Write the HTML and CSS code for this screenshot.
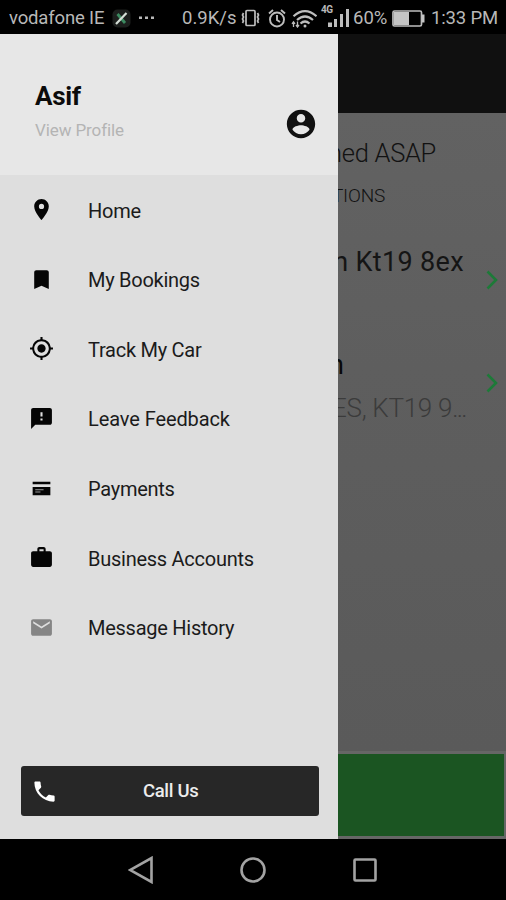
FILE: index.html
```html
<!DOCTYPE html>
<html lang="en">
<head>
<meta charset="utf-8">
<title>Menu</title>
<link rel="stylesheet" href="styles.css">
</head>
<body>
<div class="phone">
  <header class="status">
    <span class="carrier">vodafone IE</span>
    <svg class="app" width="19" height="19" viewBox="0 0 19 19"><rect x=".5" y=".5" width="18" height="18" rx="5" fill="#1c1f1d"/><path d="M5.500 5l7.500 9" stroke="#3c8a60" stroke-width="2.800"/><path d="M14.500 4L4 15" stroke="#d4ded6" stroke-width="2.200"/></svg>
    <svg class="dots" width="15" height="4" viewBox="0 0 15 4" fill="#b8b8b8"><path d="M0 .5h3v2.500H0zM6 .5h3v2.500H6zM12 .5h3v2.500h-3z"/></svg>
    <span class="speed">0.9K/s</span>
    <svg class="vibrate" width="19" height="18" viewBox="0 0 19 18" fill="none" stroke="#bdbdbd" stroke-width="1.700"><rect x="5" y="1.500" width="9" height="15" rx="1"/><path d="M2.500 4l-1 2 1 2-1 2 1 2-1 2M16.500 4l1 2-1 2 1 2-1 2 1 2"/></svg>
    <svg class="alarm" width="18" height="19" viewBox="0 0 18 19" fill="none" stroke="#bdbdbd" stroke-width="1.900"><circle cx="9" cy="10.500" r="7"/><path d="M1 4.500L5 1M17 4.500L13 1M9 6v5l3 2"/></svg>
    <svg class="wifi" width="26" height="19" viewBox="0 0 26 19" fill="none" stroke="#bdbdbd" stroke-width="2.200"><path d="M2.500 7.200Q14 -3 25.500 7.200M6 11Q14 4 22 11M9.500 14.500Q14 10.500 18.500 14.500"/><circle cx="14" cy="17" r="1.500" fill="#bdbdbd" stroke="none"/><path d="M2.500 18v-5M1 14.800l1.500-2 1.500 2M6.500 12.500v5M5 16l1.500 2L8 16" stroke-width="1.300"/></svg>
    <span class="signal"><span class="gen">4G</span><svg width="21" height="18" viewBox="0 0 21 18" fill="#bdbdbd"><path d="M0 13.500h4V18H0zM6 10h3v8H6zM12 5h3v13h-3zM18 0h3v18h-3z"/></svg></span>
    <span class="percent">60%</span>
    <svg class="battery" width="33" height="17" viewBox="0 0 33 17"><rect x="1" y="1" width="28.500" height="15" rx="1.500" fill="none" stroke="#bdbdbd" stroke-width="1.700"/><path d="M2 2h15v13H2zM30 4.500h2.500v8H30z" fill="#c4c4c4"/></svg>
    <span class="clock">1:33 PM</span>
  </header>

  <main class="screen">
    <aside class="drawer">
      <section class="profile">
        <div><h1>Asif</h1><p>View Profile</p></div>
        <svg width="34" height="34" viewBox="0 0 24 24" fill="#111"><path d="M12 2C6.480 2 2 6.480 2 12s4.480 10 10 10 10-4.480 10-10S17.520 2 12 2zm0 3c1.660 0 3 1.340 3 3s-1.340 3-3 3-3-1.340-3-3 1.340-3 3-3zm0 14.200c-2.500 0-4.710-1.280-6-3.220.030-1.990 4-3.080 6-3.080 1.990 0 5.970 1.090 6 3.080-1.290 1.940-3.500 3.220-6 3.220z"/></svg>
      </section>
      <nav class="menu">
        <a><svg viewBox="0 0 24 24"><path d="M12 2C8.130 2 5 5.130 5 9c0 5.250 7 13 7 13s7-7.750 7-13c0-3.870-3.130-7-7-7zm0 9.500a2.500 2.500 0 0 1 0-5 2.500 2.500 0 0 1 0 5z"/></svg><span>Home</span></a>
        <a><svg viewBox="0 0 24 24"><path d="M17 3H7c-1.100 0-2 .9-2 2v16l7-3 7 3V5c0-1.100-.9-2-2-2z"/></svg><span>My Bookings</span></a>
        <a><svg viewBox="0 0 24 24"><path d="M12 8c-2.210 0-4 1.790-4 4s1.790 4 4 4 4-1.790 4-4-1.790-4-4-4zm8.940 3A8.994 8.994 0 0 0 13 3.060V1h-2v2.060A8.994 8.994 0 0 0 3.060 11H1v2h2.060A8.994 8.994 0 0 0 11 20.940V23h2v-2.060A8.994 8.994 0 0 0 20.940 13H23v-2h-2.060zM12 19c-3.870 0-7-3.130-7-7s3.130-7 7-7 7 3.130 7 7-3.130 7-7 7z"/></svg><span>Track My Car</span></a>
        <a><svg viewBox="0 0 24 24"><path d="M20 2H4c-1.100 0-1.990.9-1.990 2L2 22l4-4h14c1.100 0 2-.9 2-2V4c0-1.100-.9-2-2-2zm-7 12h-2v-2h2v2zm0-4h-2V6h2v4z"/></svg><span class="feedback">Leave Feedback</span></a>
        <a><svg viewBox="0 0 24 24"><path d="M3.500 5.500h17v2.500h-17zM3.500 10.500h17v8h-17z"/><path d="M6 13.200h8M6 15.300h5" stroke="#999" stroke-width="1"/></svg><span>Payments</span></a>
        <a><svg viewBox="0 0 24 24"><path d="M20 6h-4V4c0-1.110-.89-2-2-2h-4c-1.110 0-2 .89-2 2v2H4c-1.110 0-2 .89-2 2v11c0 1.110.89 2 2 2h16c1.110 0 2-.89 2-2V8c0-1.110-.89-2-2-2zm-6 0h-4V4h4v2z"/></svg><span>Business Accounts</span></a>
        <a><svg class="mail" viewBox="0 0 24 24"><path d="M20 4H4c-1.100 0-1.990.9-1.990 2L2 18c0 1.100.9 2 2 2h16c1.100 0 2-.9 2-2V6c0-1.100-.9-2-2-2zm0 4l-8 5-8-5V6l8 5 8-5v2z"/></svg><span>Message History</span></a>
      </nav>
      <button class="call"><svg width="27" height="27" viewBox="0 0 24 24" fill="#fff"><path d="M6.620 10.790c1.440 2.830 3.760 5.140 6.590 6.590l2.200-2.200c.27-.27.67-.36 1.020-.24 1.120.37 2.330.57 3.570.57.550 0 1 .45 1 1V20c0 .55-.45 1-1 1-9.390 0-17-7.610-17-17 0-.55.45-1 1-1h3.500c.55 0 1 .45 1 1 0 1.250.2 2.450.57 3.570.110.350.030.740-.25 1.020l-2.200 2.200z"/></svg><span>Call Us</span></button>
    </aside>

    <section class="booking">
      <div class="titlebar"></div>
      <div class="content">
        <div class="line asap">ned ASAP</div>
        <div class="line options">TIONS</div>
        <div class="place first"><div class="line address">n Kt19 8ex</div><svg width="12" height="20" viewBox="0 0 12 20"><path d="M1.500 1.500l8.500 8.500-8.500 8.500"/></svg></div>
        <div class="place second"><div class="stack"><div class="line name">n</div><div class="line detail">ES, KT19 9<span class="more">...</span></div></div><svg width="12" height="20" viewBox="0 0 12 20"><path d="M1.500 1.500l8.500 8.500-8.500 8.500"/></svg></div>
      </div>
      <div class="confirm"></div>
    </section>
  </main>

  <footer class="keys">
    <svg width="26" height="28" viewBox="0 0 26 28"><path d="M23.500 2v24L2 14z"/></svg>
    <svg width="26" height="28" viewBox="0 0 26 28"><circle cx="13" cy="14" r="11.500"/></svg>
    <svg width="26" height="28" viewBox="0 0 26 28"><rect x="2.500" y="3.500" width="21" height="21" rx="1"/></svg>
  </footer>
</div>
</body>
</html>
```
FILE: styles.css
```css
* { box-sizing: border-box; }
body { margin: 0; background: #000; font-family: Roboto, "Liberation Sans", sans-serif; }
h1, p { margin: 0; }
svg { display: block; flex: none; }
.phone { width: 506px; height: 900px; display: flex; flex-direction: column; overflow: hidden; }

.status { height: 34px; flex: none; display: flex; align-items: center; padding: 2px 0 0 9px; color: #b8b8b8; font-size: 18.500px; white-space: nowrap; background: #000; }
.status span { flex: none; }
.carrier { width: 103px; letter-spacing: -.15px; }
.dots { margin-left: 8px; }
.speed { width: 59px; margin-left: 28px; }
.alarm { margin-left: 8px; }
.wifi { margin-left: 5px; }
.signal { position: relative; width: 28px; padding-left: 7px; margin-left: 4px; }
.gen { position: absolute; left: 0; top: -5px; font-size: 10px; line-height: 12px; font-weight: 700; letter-spacing: -.5px; }
.percent { width: 36px; margin-left: 4px; }
.battery { margin-left: 3px; }
.clock { margin-left: 6px; letter-spacing: -.15px; }

.screen { height: 805px; flex: none; display: flex; }
.drawer { width: 338px; flex: none; display: flex; flex-direction: column; background: #dedede; }
.profile { height: 141px; flex: none; display: flex; justify-content: space-between; background: #e7e7e7; padding: 45px 20px 0 35px; }
.profile h1 { font-size: 26px; line-height: 34px; font-weight: 700; color: #0b0b0b; letter-spacing: -.3px; }
.profile p { margin-top: 6px; font-size: 17px; line-height: 22px; color: #b4b4b4; letter-spacing: -.1px; }
.profile svg { margin-top: 28px; }
.menu { height: 487px; flex: none; display: grid; grid-template-rows: repeat(7, 1fr); }
.menu a { display: flex; align-items: center; padding-left: 28.500px; font-size: 20px; color: #1b1b1b; }
.menu svg { width: 25px; height: 25px; fill: #050505; }
.menu .mail { fill: #858585; }
.menu span { margin: 2px 0 0 34.500px; letter-spacing: -.26px; }
.menu .feedback { letter-spacing: -.1px; }
.call { width: 298px; height: 50px; margin: 104px 0 0 20.500px; padding: 0 120px 0 10px; border: 0; border-radius: 3px; display: flex; align-items: center; justify-content: space-between; background: #272727; color: #ececec; font: 500 18.500px Roboto, sans-serif; letter-spacing: -.3px; }

.booking { width: 168px; display: flex; flex-direction: column; overflow: hidden; background: #666; }
.titlebar { height: 79px; flex: none; background: #101010; }
.content { height: 638px; flex: none; background: linear-gradient(#626262, #5e5e5e 40%, #5a5a5a); }
.line { display: flex; justify-content: flex-end; white-space: nowrap; }
.asap { width: 98px; height: 60px; padding-top: 24px; font-size: 25.500px; line-height: 32px; font-weight: 300; color: #121212; letter-spacing: -.3px; }
.options { width: 47px; height: 60px; padding-top: 11px; font-size: 19px; line-height: 24px; font-weight: 300; color: #121212; letter-spacing: -.2px; }
.place { display: flex; }
.place svg { fill: none; stroke: #1d7a38; stroke-width: 2.600; }
.first { height: 103px; }
.address { width: 126px; padding-top: 12px; font-size: 27px; line-height: 34px; color: #151515; letter-spacing: .35px; }
.first svg { margin: 37px 0 0 22px; }
.second { height: 107px; }
.stack { width: 128px; }
.name { width: 6px; height: 49px; padding-top: 12px; font-size: 27px; line-height: 34px; color: #080808; }
.detail { padding-top: 7px; font-size: 26px; line-height: 32px; font-weight: 300; color: #3b3b3b; letter-spacing: -.3px; }
.more { letter-spacing: -1.600px; }
.second svg { margin: 37px 0 0 20px; }
.confirm { height: 82px; flex: none; margin: 3px 2px 0 0; background: #1b5522; }

.keys { height: 61px; flex: none; display: flex; justify-content: center; gap: 86px; padding-top: 17px; background: #000; }
.keys svg { fill: none; stroke: #a3a3a3; stroke-width: 2.600; }
```
